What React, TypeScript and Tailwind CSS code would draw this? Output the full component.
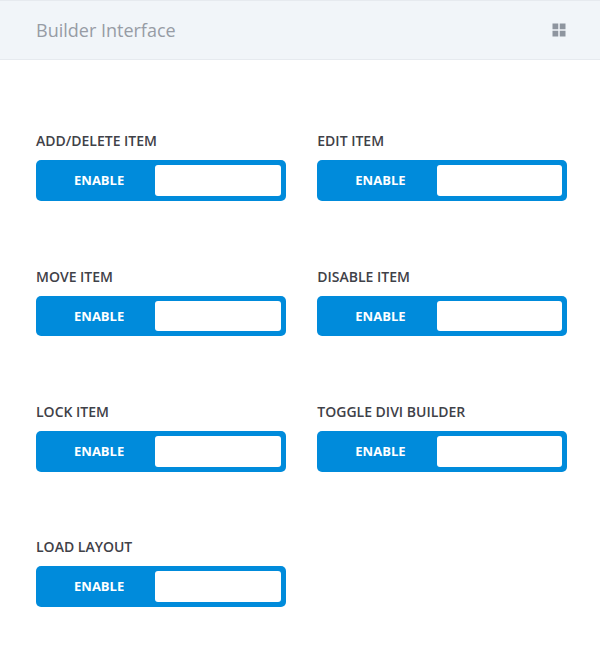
import React from 'react';

const items = [
  'ADD/DELETE ITEM',
  'EDIT ITEM',
  'MOVE ITEM',
  'DISABLE ITEM',
  'LOCK ITEM',
  'TOGGLE DIVI BUILDER',
  'LOAD LAYOUT',
];

const Toggle: React.FC = () => (
  <div className="flex h-[40.5px] w-[250px] rounded-[5px] bg-[#008bdb] p-[5px]">
    <div className="flex w-[114.3px] items-center justify-center pt-px pl-0.5 text-[13px] font-bold text-white">
      ENABLE
    </div>
    <div className="flex-1 rounded-[3px] bg-white"></div>
  </div>
);

const App: React.FC = () => {
  return (
    <div className="h-[653px] w-[600px] bg-white font-['Open_Sans',sans-serif]">
      <header className="flex h-[60px] items-center justify-between border-t border-b border-[#e6eaef] bg-[#f1f5f9] pl-9 pr-[34px]">
        <h1 className="text-lg font-normal text-[#979ca5]">Builder Interface</h1>
        <svg width="14" height="14" viewBox="0 0 14 14" fill="#8e959f">
          <rect x="0.5" y="0.5" width="5.75" height="5.75" />
          <rect x="7.75" y="0.5" width="5.75" height="5.75" />
          <rect x="0.5" y="7.75" width="5.75" height="5.75" />
          <rect x="7.75" y="7.75" width="5.75" height="5.75" />
        </svg>
      </header>
      <div className="grid grid-cols-[250px_250px] gap-x-[31.3px] gap-y-[64.83px] pl-9 pt-[70.4px]">
        {items.map((item) => (
          <div key={item}>
            <div className="mb-2 text-sm leading-[22px] font-semibold text-[#3f4148]">{item}</div>
            <Toggle />
          </div>
        ))}
      </div>
    </div>
  );
};

export default App;
